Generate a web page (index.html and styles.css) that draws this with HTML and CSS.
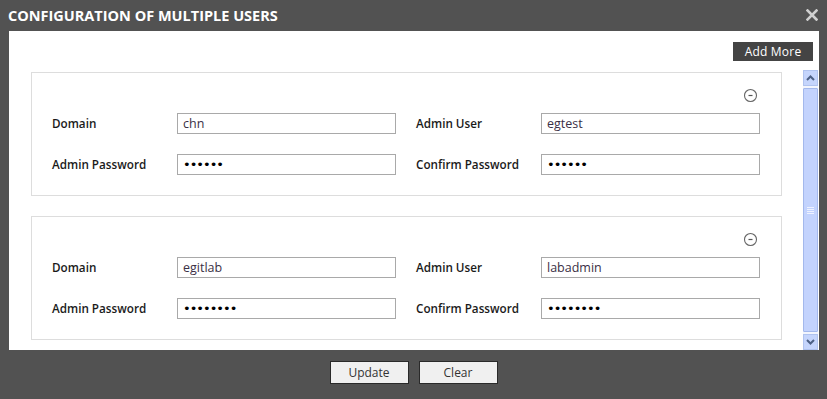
FILE: index.html
```html
<!DOCTYPE html>
<html lang="en">
<head>
    <meta charset="UTF-8">
    <title>Configuration of Multiple Users</title>
    <link rel="stylesheet" href="styles.css">
</head>
<body>
    <div class="dialog">
        <div class="title-bar">
            <span class="title">CONFIGURATION OF MULTIPLE USERS</span>
            <svg class="close" width="12" height="12" viewBox="0 0 12 12">
                <path d="M1.5 1.5 L10.5 10.5 M10.5 1.5 L1.5 10.5" stroke="#cfcfcf" stroke-width="2.6" stroke-linecap="square"/>
            </svg>
        </div>
        <div class="panel">
            <div class="toolbar">
                <button class="add-more">Add More</button>
            </div>
            <div class="scroll-area">
                <div class="users">
                    <div class="user-box">
                        <div class="box-head">
                            <svg class="remove" width="15" height="15" viewBox="0 0 15 15">
                                <circle cx="7.5" cy="7.5" r="6" fill="none" stroke="#666" stroke-width="1.1"/>
                                <path d="M5.5 7.5 H9.5" stroke="#555" stroke-width="1.2"/>
                            </svg>
                        </div>
                        <div class="fields">
                            <label>Domain</label>
                            <input type="text" value="chn">
                            <span></span>
                            <label>Admin User</label>
                            <input type="text" value="egtest">
                            <label>Admin Password</label>
                            <input type="password" value="abcdef">
                            <span></span>
                            <label>Confirm Password</label>
                            <input type="password" value="abcdef">
                        </div>
                    </div>
                    <div class="user-box">
                        <div class="box-head">
                            <svg class="remove" width="15" height="15" viewBox="0 0 15 15">
                                <circle cx="7.5" cy="7.5" r="6" fill="none" stroke="#666" stroke-width="1.1"/>
                                <path d="M5.5 7.5 H9.5" stroke="#555" stroke-width="1.2"/>
                            </svg>
                        </div>
                        <div class="fields">
                            <label>Domain</label>
                            <input type="text" value="egitlab">
                            <span></span>
                            <label>Admin User</label>
                            <input type="text" value="labadmin">
                            <label>Admin Password</label>
                            <input type="password" value="abcdefgh">
                            <span></span>
                            <label>Confirm Password</label>
                            <input type="password" value="abcdefgh">
                        </div>
                    </div>
                </div>
                <div class="scrollbar">
                    <div class="arrow">
                        <svg width="9" height="6" viewBox="0 0 9 6"><path d="M1 5 L4.5 1.5 L8 5" fill="none" stroke="#4d6185" stroke-width="2"/></svg>
                    </div>
                    <div class="track">
                        <div class="thumb">
                            <span class="grip"></span>
                        </div>
                    </div>
                    <div class="arrow">
                        <svg width="9" height="6" viewBox="0 0 9 6"><path d="M1 1 L4.5 4.5 L8 1" fill="none" stroke="#4d6185" stroke-width="2"/></svg>
                    </div>
                </div>
            </div>
        </div>
        <div class="footer">
            <button class="action">Update</button>
            <button class="action">Clear</button>
        </div>
    </div>
</body>
</html>
```

FILE: styles.css
```css
body {
    margin: 0;
    background: #525252;
    font-family: "Open Sans", "DejaVu Sans", sans-serif;
}
.dialog {
    width: 827px;
    height: 399px;
}
.title-bar {
    height: 31px;
    display: flex;
    justify-content: space-between;
    align-items: center;
    padding: 0 9px 0 8px;
}
.title {
    color: #ffffff;
    font-weight: 700;
    font-size: 14.5px;
}
.close {
    margin-top: -2px;
}
.panel {
    margin: 0 8px 0 9px;
    height: 319px;
    background: #ffffff;
    display: flex;
    flex-direction: column;
}
.toolbar {
    display: flex;
    justify-content: flex-end;
    padding: 11px 6px 0 0;
}
.add-more {
    width: 80px;
    height: 19px;
    border: none;
    background: #444444;
    color: #ffffff;
    font-family: "Open Sans", sans-serif;
    font-size: 12px;
    letter-spacing: 0.2px;
    padding: 0;
}
.scroll-area {
    margin-top: 9px;
    flex: 1;
    display: flex;
    overflow: hidden;
}
.users {
    flex: 1;
    padding: 2px 21px 0 22px;
    display: flex;
    flex-direction: column;
    gap: 20px;
}
.user-box {
    border: 1px solid #dddddd;
    padding: 15px 0 20px 20px;
    flex-shrink: 0;
}
.box-head {
    display: flex;
    justify-content: flex-end;
    padding-right: 23px;
    height: 25px;
}
.fields {
    display: grid;
    grid-template-columns: 125px 219px 20px 125px 219px;
    row-gap: 20px;
    align-items: center;
}
.fields label {
    font-size: 11.7px;
    font-weight: 600;
    color: #1a1a1a;
    margin-top: -1px;
}
.fields input {
    box-sizing: border-box;
    height: 21px;
    width: 219px;
    border: 1px solid #a9a9a9;
    padding: 0 5px;
    font-family: "Open Sans", sans-serif;
    font-size: 12.5px;
    color: #3a2f45;
    margin: 0;
}
.fields input[type=password] {
    font-family: "DejaVu Sans", sans-serif;
    font-size: 13px;
    letter-spacing: -1px;
    color: #000000;
}
.scrollbar {
    width: 15px;
    margin-right: 1px;
    display: flex;
    flex-direction: column;
}
.arrow {
    height: 16px;
    box-sizing: border-box;
    background: #c5d5fc;
    border: 1px solid #b0c3ef;
    display: flex;
    align-items: center;
    justify-content: center;
}
.track {
    flex: 1;
    background: #f2f5fd;
    padding: 2px 0;
    display: flex;
}
.thumb {
    flex: 1;
    box-sizing: border-box;
    background: #c3d3fd;
    border: 1px solid #a3b8ec;
    border-radius: 1px;
    display: flex;
    align-items: center;
    justify-content: center;
}
.grip {
    width: 7px;
    height: 7px;
    background: repeating-linear-gradient(#eef2ff 0 1px, transparent 1px 2px);
}
.footer {
    display: flex;
    justify-content: center;
    gap: 10px;
    padding-top: 11px;
}
.action {
    width: 79px;
    height: 23px;
    border: 1px solid #2a2a2a;
    background: #f0f0f0;
    color: #333333;
    font-family: "Open Sans", sans-serif;
    font-size: 12px;
    padding: 0;
}
```
